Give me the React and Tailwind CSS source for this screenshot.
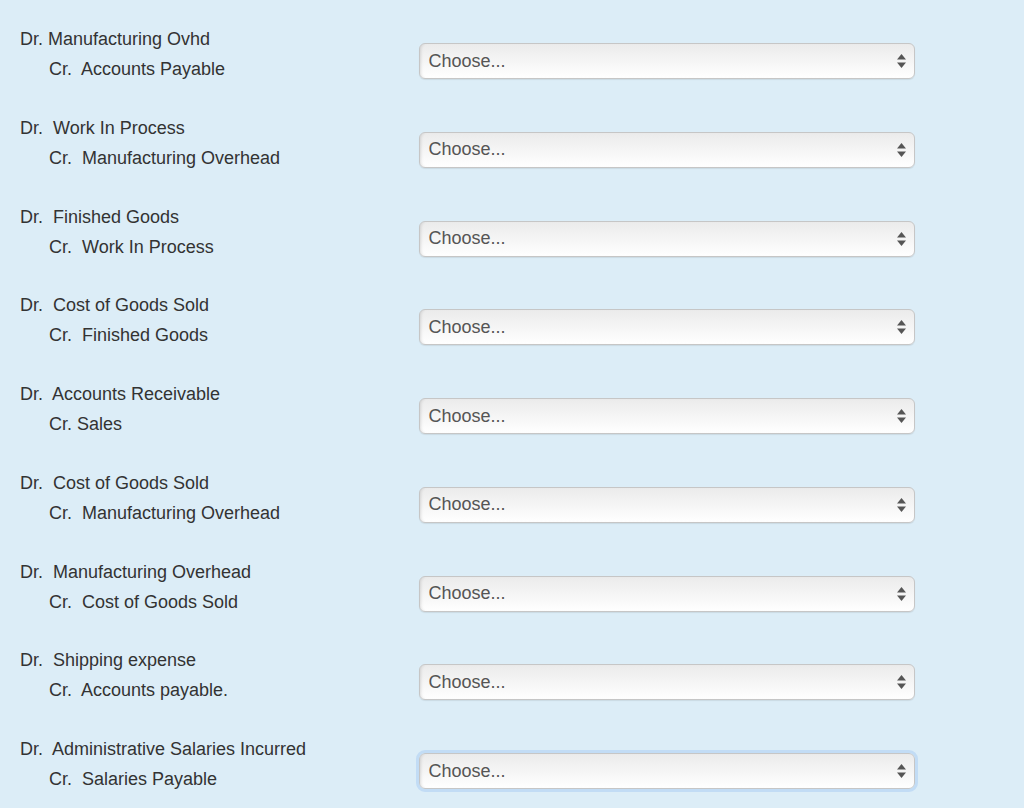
import React from 'react';

const entries = [
  { dr: 'Dr. Manufacturing Ovhd', cr: 'Cr.  Accounts Payable' },
  { dr: 'Dr.  Work In Process', cr: 'Cr.  Manufacturing Overhead' },
  { dr: 'Dr.  Finished Goods', cr: 'Cr.  Work In Process' },
  { dr: 'Dr.  Cost of Goods Sold', cr: 'Cr.  Finished Goods' },
  { dr: 'Dr.  Accounts Receivable', cr: 'Cr. Sales' },
  { dr: 'Dr.  Cost of Goods Sold', cr: 'Cr.  Manufacturing Overhead' },
  { dr: 'Dr.  Manufacturing Overhead', cr: 'Cr.  Cost of Goods Sold' },
  { dr: 'Dr.  Shipping expense', cr: 'Cr.  Accounts payable.' },
  { dr: 'Dr.  Administrative Salaries Incurred', cr: 'Cr.  Salaries Payable' },
];

function ChooseBox({ focused }) {
  return (
    <div
      className={`relative w-[496px] h-[36px] mt-[19px] rounded-[6px] border border-[#c6c6c6] bg-gradient-to-b from-[#ebebeb] to-[#ffffff] shadow-[inset_3px_0_3px_-2px_rgba(0,0,0,0.12),0_1px_1px_rgba(0,0,0,0.08)] flex items-center pl-[9px] ${focused ? 'outline outline-[3px] outline-[#c2dcf5]' : ''}`}
    >
      <span className="text-[18px] text-[#555555]">Choose...</span>
      <svg className="absolute right-[8px] top-1/2 -translate-y-1/2" width="9" height="14" viewBox="0 0 9 14">
        <path d="M4.5 0 L9 5.5 L0 5.5 Z" fill="#555555" />
        <path d="M0 8.5 L9 8.5 L4.5 14 Z" fill="#555555" />
      </svg>
    </div>
  );
}

export default function App() {
  return (
    <div className="min-h-[808px] w-full bg-[#dcedf7] pt-[24px] pl-[20px] font-['Liberation_Sans',Arial,sans-serif] text-[#333333]">
      {entries.map((e, i) => (
        <div key={i} className="flex items-start h-[88.75px]">
          <div className="w-[398.5px] text-[18px] leading-[30px] whitespace-pre">
            <div>{e.dr}</div>
            <div className="pl-[29px]">{e.cr}</div>
          </div>
          <ChooseBox focused={i === entries.length - 1} />
        </div>
      ))}
    </div>
  );
}
